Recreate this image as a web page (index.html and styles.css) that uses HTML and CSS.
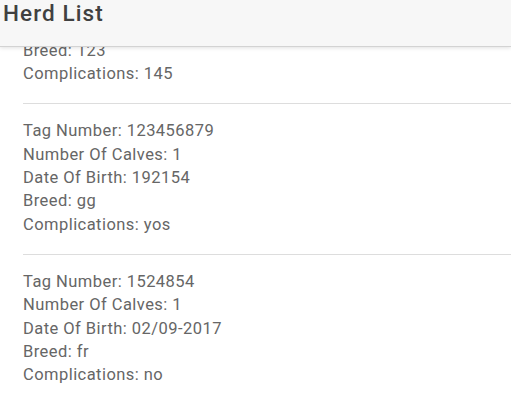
FILE: index.html
```html
<!DOCTYPE html>
<html lang="en">
<head>
<meta charset="utf-8">
<title>Herd List</title>
<link rel="stylesheet" href="styles.css">
</head>
<body>
<header class="bar">
  <h1 class="title">Herd List</h1>
</header>
<main class="content">
  <ul class="list">
    <li class="item">
      <p>Tag Number: 123</p>
      <p>Number Of Calves: 1</p>
      <p>Date Of Birth: 123</p>
      <p>Breed: 123</p>
      <p>Complications: 145</p>
    </li>
    <li class="item">
      <p>Tag Number: 123456879</p>
      <p>Number Of Calves: 1</p>
      <p>Date Of Birth: 192154</p>
      <p>Breed: gg</p>
      <p>Complications: yos</p>
    </li>
    <li class="item">
      <p>Tag Number: 1524854</p>
      <p>Number Of Calves: 1</p>
      <p>Date Of Birth: 02/09-2017</p>
      <p>Breed: fr</p>
      <p>Complications: no</p>
    </li>
  </ul>
</main>
</body>
</html>
```
FILE: styles.css
```css
html, body {
  margin: 0;
  padding: 0;
  height: 100%;
  overflow: hidden;
  background: #ffffff;
  font-family: Roboto, "Noto Sans", Arial, sans-serif;
}

.bar {
  position: relative;
  z-index: 2;
  height: 46px;
  background: #f7f7f7;
  border-bottom: 1px solid #d3d3d3;
  box-shadow: 0 1px 4px rgba(0, 0, 0, 0.12);
}

.title {
  margin: 0;
  padding-left: 3px;
  font-size: 22.5px;
  font-weight: 500;
  line-height: 26px;
  letter-spacing: 1.1px;
  color: #404040;
}

.content {
  position: relative;
  z-index: 1;
  height: calc(100% - 47px);
  overflow: hidden;
}

.list {
  list-style: none;
  margin: -93px 0 0 0;
  padding: 0 0 0 23px;
}

.item {
  padding: 15px 0 18px 0;
  border-bottom: 1px solid #dddddd;
}

.item p {
  margin: 0;
  font-size: 16.5px;
  line-height: 23.3px;
  letter-spacing: 0.45px;
  color: #666666;
}
```
